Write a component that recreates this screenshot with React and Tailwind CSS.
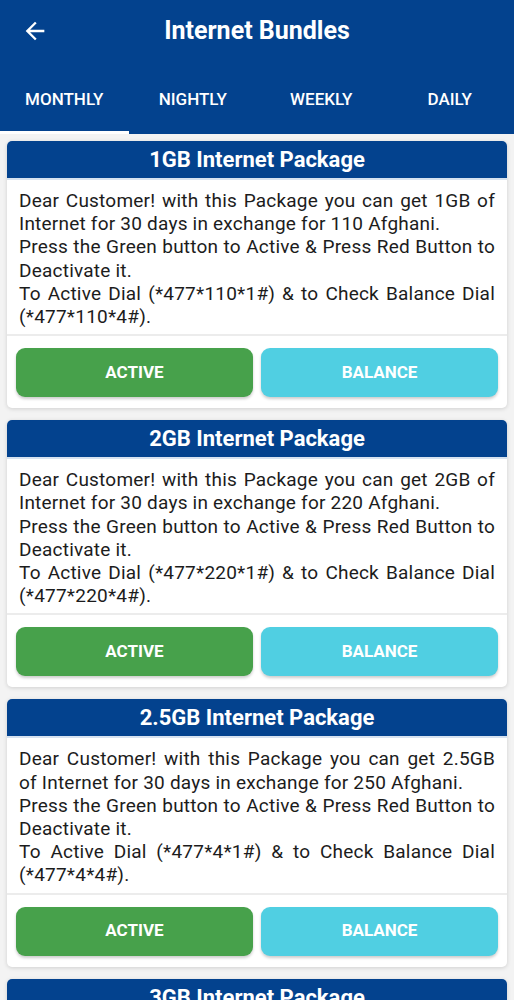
import React from 'react';

const tabs = ['MONTHLY', 'NIGHTLY', 'WEEKLY', 'DAILY'];

const packages = [
  { size: '1GB', price: '110', code: '110' },
  { size: '2GB', price: '220', code: '220' },
  { size: '2.5GB', price: '250', code: '4' },
  { size: '3GB', price: '300', code: '300' },
];

function PackageCard({ pkg }) {
  return (
    <div className="bg-white rounded-[5px] shadow-[0_1px_4px_rgba(0,0,0,0.15)] shrink-0">
      <div className="bg-[#03428e] h-[37px] rounded-t-[5px] flex items-center justify-center text-white text-[22px] font-bold">
        {pkg.size} Internet Package
      </div>
      <div className="border-t-2 border-[#d6e2f0] border-b-2 border-b-[#ececec] px-3 pt-[9px] pb-[6px] text-[19px] tracking-[0.22px] leading-[23.2px] text-[#1c1c1c] text-justify">
        Dear Customer! with this Package you can get {pkg.size} of Internet for 30 days in exchange for {pkg.price} Afghani.
        <br />
        Press the Green button to Active &amp; Press Red Button to Deactivate it.
        <br />
        To Active Dial (*477*{pkg.code}*1#) &amp; to Check Balance Dial (*477*{pkg.code}*4#).
      </div>
      <div className="grid grid-cols-2 gap-2 px-[9px] pt-[12px] pb-[11px]">
        <button className="h-[49px] rounded-[9px] bg-[#47a14b] text-white text-[17px] font-bold shadow-[0_2px_3px_rgba(0,0,0,0.2)]">
          ACTIVE
        </button>
        <button className="h-[49px] rounded-[9px] bg-[#50cfe2] text-white text-[17px] font-bold shadow-[0_2px_3px_rgba(0,0,0,0.2)]">
          BALANCE
        </button>
      </div>
    </div>
  );
}

export default function App() {
  return (
    <div className="w-[514px] h-[1000px] overflow-hidden bg-[#f3f3f3] font-['Roboto',sans-serif] flex flex-col">
      <div className="bg-[#03428e] text-white shrink-0">
        <div className="h-[62px] relative flex items-center justify-center">
          <svg className="absolute left-[21px] top-[17px]" width="28" height="28" viewBox="0 0 24 24" fill="white">
            <path d="M20 11H7.83l5.59-5.59L12 4l-8 8 8 8 1.41-1.41L7.83 13H20v-2z" />
          </svg>
          <span className="text-[25px] font-bold">Internet Bundles</span>
        </div>
        <div className="h-[72px] grid grid-cols-4">
          {tabs.map((t, i) => (
            <div key={t} className="flex flex-col">
              <div className="flex-1 flex items-center justify-center text-[17px] font-medium pt-[6px]">{t}</div>
              <div className={i === 0 ? 'h-[3px] bg-white' : 'h-[3px]'} />
            </div>
          ))}
        </div>
      </div>
      <div className="flex flex-col gap-[12px] px-[7px] pt-[7px]">
        {packages.map((p) => (
          <PackageCard key={p.size} pkg={p} />
        ))}
      </div>
    </div>
  );
}
